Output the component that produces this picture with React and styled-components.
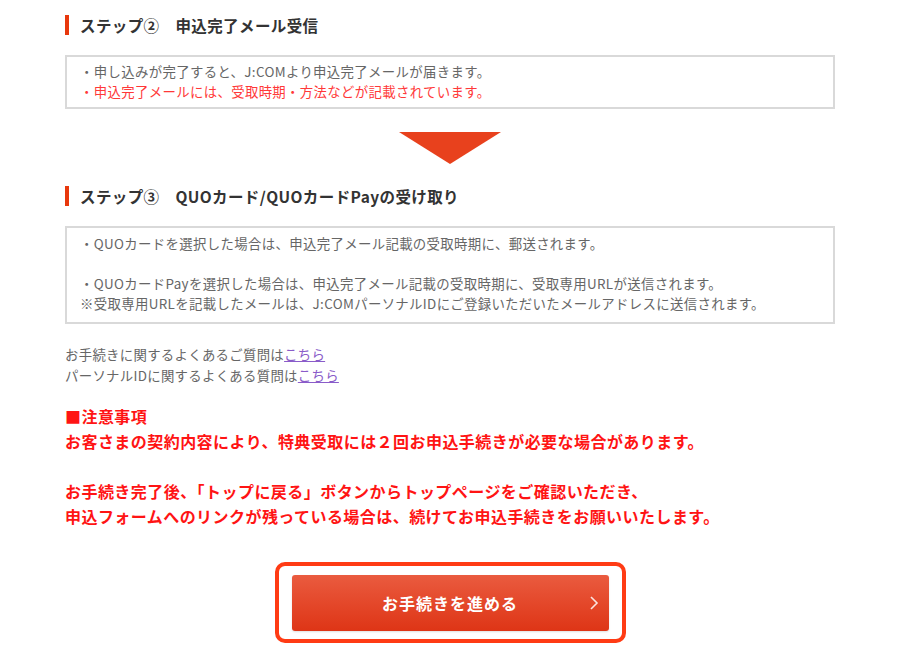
import React from "react";
import styled, { createGlobalStyle } from "styled-components";

const Global = createGlobalStyle`
  html, body { margin: 0; padding: 0; background: #fff; }
  body { font-family: "Noto Sans CJK JP", "Noto Sans", sans-serif; }
  *, *::before, *::after { box-sizing: border-box; }
`;

const Page = styled.div`
  width: 770px;
  margin: 0 auto;
  padding-top: 15px;
  padding-bottom: 20px;
`;

const StepHeading = styled.h2`
  display: flex;
  align-items: center;
  height: 20px;
  margin: ${(p) => p.$top || 0}px 0 0;
  padding-left: 11px;
  border-left: 4px solid #e8380d;
  font-size: 15.5px;
  font-weight: 700;
  color: #333;
  letter-spacing: 0.4px;
  white-space: pre;
`;

const InfoBox = styled.div`
  margin-top: 20px;
  border: 2px solid #d9d9d9;
  padding: ${(p) => p.$pad || "4px 13px 6px"};
  font-size: 13.4px;
  line-height: 20px;
  letter-spacing: 0.35px;
  color: #666;
`;

const Line = styled.p`
  margin: 0;
  color: ${(p) => (p.$red ? "#ff3838" : "#666")};
  margin-top: ${(p) => (p.$gap ? "20px" : "0")};
  white-space: nowrap;
`;

const Arrow = styled.div`
  width: 0;
  height: 0;
  margin: 23px auto 0;
  border-left: 51px solid transparent;
  border-right: 51px solid transparent;
  border-top: 32px solid #e8411d;
`;

const Faq = styled.div`
  margin-top: 20px;
  font-size: 13.4px;
  line-height: 21px;
  letter-spacing: 0.3px;
  color: #666;
`;

const FaqLink = styled.a`
  color: #8a5cc9;
  text-decoration: underline;
`;

const Notice = styled.div`
  margin-top: 18px;
  font-size: 16px;
  font-weight: 700;
  line-height: 25px;
  letter-spacing: 0.45px;
  color: #ff1414;
`;

const NoticePara = styled.p`
  margin: ${(p) => (p.$gap ? "25px" : "0")} 0 0;
`;

const ButtonFrame = styled.div`
  width: 351px;
  margin: 33px auto 0;
  border: 4px solid #ff3b14;
  border-radius: 10px;
  padding: 9px 13px 8px;
`;

const ActionButton = styled.button`
  position: relative;
  display: flex;
  align-items: center;
  justify-content: center;
  width: 317px;
  height: 56px;
  border: none;
  border-radius: 3px;
  background: linear-gradient(#ea5b3f, #de3516);
  color: #fff;
  font-family: "Noto Sans CJK JP", sans-serif;
  font-size: 16px;
  font-weight: 700;
  letter-spacing: 1px;
  cursor: pointer;
  box-shadow: 0 1px 2px rgba(0,0,0,0.12);
`;

const Chevron = styled.svg`
  position: absolute;
  right: 10px;
  top: 50%;
  transform: translateY(-50%);
`;

export default function App() {
  return (
    <>
      <Global />
      <Page>
        <StepHeading>{"ステップ②　申込完了メール受信"}</StepHeading>
        <InfoBox>
          <Line>・申し込みが完了すると、J:COMより申込完了メールが届きます。</Line>
          <Line $red>・申込完了メールには、受取時期・方法などが記載されています。</Line>
        </InfoBox>
        <Arrow />
        <StepHeading $top={22}>{"ステップ③　QUOカード/QUOカードPayの受け取り"}</StepHeading>
        <InfoBox $pad="5px 13px 9px">
          <Line>・QUOカードを選択した場合は、申込完了メール記載の受取時期に、郵送されます。</Line>
          <Line $gap>・QUOカードPayを選択した場合は、申込完了メール記載の受取時期に、受取専用URLが送信されます。</Line>
          <Line>※受取専用URLを記載したメールは、J:COMパーソナルIDにご登録いただいたメールアドレスに送信されます。</Line>
        </InfoBox>
        <Faq>
          <div>お手続きに関するよくあるご質問は<FaqLink href="#">こちら</FaqLink></div>
          <div>パーソナルIDに関するよくある質問は<FaqLink href="#">こちら</FaqLink></div>
        </Faq>
        <Notice>
          <NoticePara>■注意事項<br />お客さまの契約内容により、特典受取には２回お申込手続きが必要な場合があります。</NoticePara>
          <NoticePara $gap>お手続き完了後、「トップに戻る」ボタンからトップページをご確認いただき、<br />申込フォームへのリンクが残っている場合は、続けてお申込手続きをお願いいたします。</NoticePara>
        </Notice>
        <ButtonFrame>
          <ActionButton>
            お手続きを進める
            <Chevron width="10" height="16" viewBox="0 0 10 16" fill="none">
              <path d="M2 2 L8 8 L2 14" stroke="rgba(255,255,255,0.85)" strokeWidth="1.6" />
            </Chevron>
          </ActionButton>
        </ButtonFrame>
      </Page>
    </>
  );
}
